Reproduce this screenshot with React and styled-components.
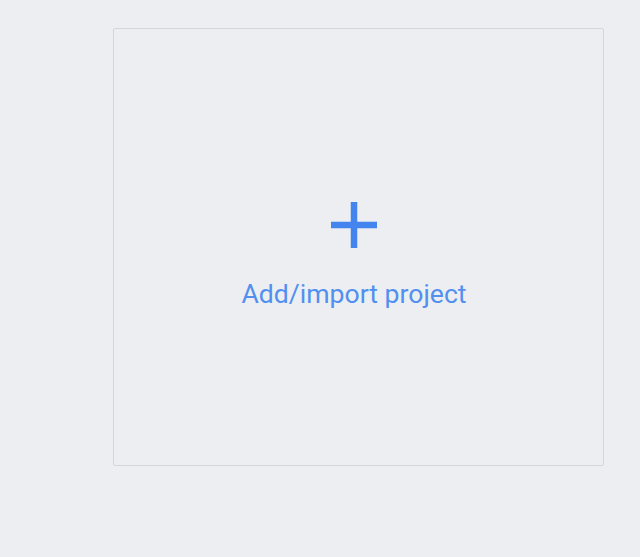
import React from 'react';
import styled, { createGlobalStyle } from 'styled-components';

const GlobalStyle = createGlobalStyle`
  html, body {
    margin: 0;
    padding: 0;
    background: #eceef1;
  }
  body {
    font-family: Roboto, "Liberation Sans", sans-serif;
  }
`;

const Page = styled.div`
  width: 640px;
  height: 557px;
  padding: 28px 0 0 113px;
  box-sizing: border-box;
  background: #eceef1;
`;

const AddCard = styled.div`
  width: 491px;
  height: 438px;
  box-sizing: border-box;
  border: 1.5px solid #d4d6d9;
  border-radius: 2px;
  display: flex;
  flex-direction: column;
  align-items: center;
  padding: 172px 9px 0 0;
  cursor: pointer;
`;

const PlusIcon = styled.svg`
  width: 48px;
  height: 48px;
  display: block;
`;

const Label = styled.div`
  margin-top: 30px;
  font-size: 26.6px;
  line-height: 30px;
  color: #5290f0;
`;

export default function App() {
  return (
    <>
      <GlobalStyle />
      <Page>
        <AddCard>
          <PlusIcon viewBox="0 0 48 48">
            <path d="M24 1v46M1 24h46" stroke="#4384ef" strokeWidth="6.5" fill="none" />
          </PlusIcon>
          <Label>Add/import project</Label>
        </AddCard>
      </Page>
    </>
  );
}
